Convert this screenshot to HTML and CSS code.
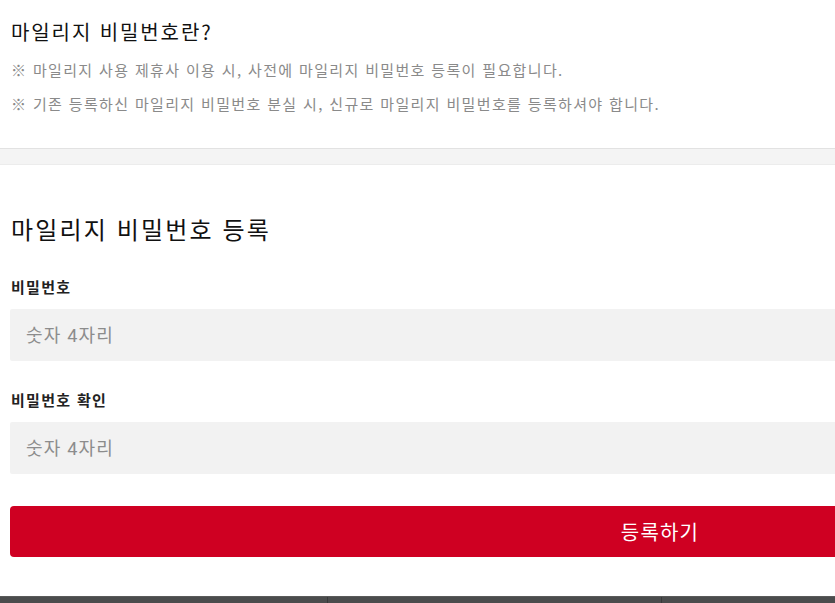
FILE: index.html
```html
<!DOCTYPE html>
<html lang="ko">
<head>
<meta charset="utf-8">
<title>마일리지 비밀번호 등록</title>
<link rel="stylesheet" href="styles.css">
</head>
<body>
<div class="page">
  <section class="info">
    <h2 class="info-title">마일리지 비밀번호란?</h2>
    <p class="info-text">※ 마일리지 사용 제휴사 이용 시, 사전에 마일리지 비밀번호 등록이 필요합니다.</p>
    <p class="info-text">※ 기존 등록하신 마일리지 비밀번호 분실 시, 신규로 마일리지 비밀번호를 등록하셔야 합니다.</p>
  </section>
  <div class="divider"></div>
  <section class="form">
    <h2 class="form-title">마일리지 비밀번호 등록</h2>
    <label class="field-label" for="pw">비밀번호</label>
    <input class="field-input" id="pw" type="password" placeholder="숫자 4자리">
    <label class="field-label second" for="pw2">비밀번호 확인</label>
    <input class="field-input" id="pw2" type="password" placeholder="숫자 4자리">
    <button class="submit" type="button">등록하기</button>
  </section>
  <nav class="tabbar">
    <a class="tab"></a>
    <a class="tab"></a>
    <a class="tab"></a>
    <a class="tab"></a>
  </nav>
</div>
</body>
</html>
```

FILE: styles.css
```css
html {
  overflow: hidden;
}
body {
  margin: 0;
  background: #fff;
  font-family: "Noto Sans CJK KR", Roboto, sans-serif;
}
.page {
  width: 1320px;
}
.info {
  padding: 20px 10px 34px 11px;
}
.info-title {
  margin: 0;
  font-size: 20px;
  line-height: 24px;
  font-weight: 400;
  letter-spacing: 1.9px;
  color: #111;
}
.info-text {
  margin: 16px 0 0;
  font-size: 15px;
  line-height: 20px;
  letter-spacing: 1.35px;
  color: #8a8a8a;
}
.info-text + .info-text {
  margin-top: 14px;
}
.divider {
  height: 15px;
  background: #f4f4f4;
  border-top: 1px solid #e2e2e2;
  border-bottom: 1px solid #ececec;
}
.form {
  padding: 49px 10px 39px;
  display: flex;
  flex-direction: column;
}
.form-title {
  margin: 0 0 0 1px;
  font-size: 24px;
  line-height: 30px;
  font-weight: 400;
  letter-spacing: 2.15px;
  color: #111;
}
.field-label {
  margin: 33px 0 12px 1px;
  font-size: 15px;
  line-height: 20px;
  font-weight: 700;
  letter-spacing: 1.3px;
  color: #222;
}
.field-label.second {
  margin-top: 29px;
}
.field-input {
  box-sizing: border-box;
  height: 52px;
  border: 0;
  border-radius: 2px;
  background: #f2f2f2;
  padding: 0 16px;
  font-family: Roboto, "Noto Sans CJK KR", sans-serif;
  font-size: 18px;
  letter-spacing: 1.2px;
  color: #333;
  outline: none;
}
.field-input::placeholder {
  color: #8c8c8c;
}
.submit {
  margin-top: 32px;
  height: 51px;
  border: 0;
  border-radius: 4px;
  background: #cf0022;
  color: #fff;
  font-family: "Noto Sans CJK KR", sans-serif;
  font-size: 20px;
  font-weight: 400;
  letter-spacing: 1.2px;
}
.tabbar {
  display: grid;
  grid-template-columns: 327px 334px 334px 1fr;
  height: 40px;
  background: #4b4c4d;
  border-top: 1px solid #5a5a5a;
}
.tab + .tab {
  border-left: 1px solid #38393a;
}
```
